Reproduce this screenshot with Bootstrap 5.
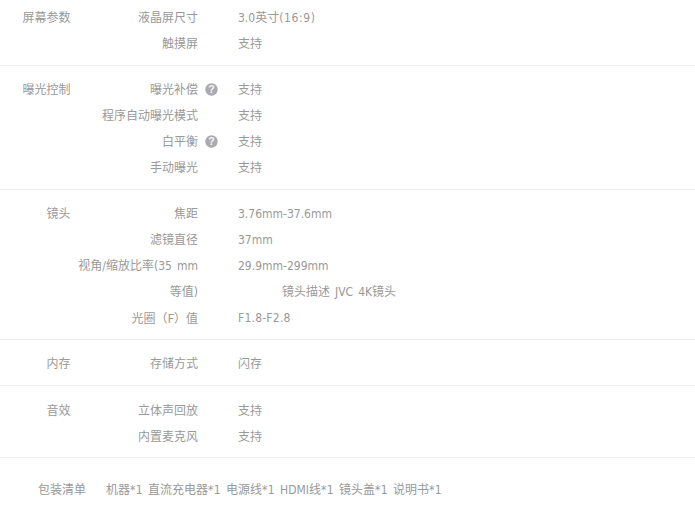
<!DOCTYPE html>
<html lang="zh">
<head>
<meta charset="utf-8">
<title>参数</title>
<link href="https://cdn.jsdelivr.net/npm/bootstrap@5.3.0/dist/css/bootstrap.min.css" rel="stylesheet">
<style>
body{font-family:"DejaVu Sans","Noto Sans CJK SC",sans-serif;font-stretch:condensed;font-size:12px;line-height:26px;word-spacing:1.6px;color:#999;background:#fff;overflow:hidden}
.spec-group{border-bottom:1px solid #eee}
.g1{padding:5px 0 8px}
.g2{padding:11px 0 8px}
.g3{padding:11px 0 8px}
.g4{padding:11px 0 8px}
.g5{padding:12px 0 7px}
.spec-title{width:70.5px;text-align:right;flex:none}
.spec-rows{flex:1}
.spec-name{width:127.5px;margin-right:40px;text-align:right;flex:none;position:relative}
.spec-value.shift{padding-left:44px}
.help-dot{position:absolute;left:134.5px;top:6px;width:13px;height:13px}
.paren-tc{font-family:"Noto Sans CJK TC",sans-serif}
.wide-ratio{letter-spacing:.65px}
.wide-fnum{letter-spacing:.22px}
.qty{letter-spacing:.35px}
.pack{padding:19px 0 0 38px}
.pack-title{margin-right:20px}
</style>
</head>
<body>
<div class="spec-group g1 d-flex">
  <div class="spec-title">屏幕参数</div>
  <div class="spec-rows">
    <div class="d-flex"><div class="spec-name">液晶屏尺寸</div><div class="spec-value">3.0英寸<span class="wide-ratio">(16:9)</span></div></div>
    <div class="d-flex"><div class="spec-name">触摸屏</div><div class="spec-value">支持</div></div>
  </div>
</div>
<div class="spec-group g2 d-flex">
  <div class="spec-title">曝光控制</div>
  <div class="spec-rows">
    <div class="d-flex"><div class="spec-name">曝光补偿<svg class="help-dot" viewBox="0 0 13 13"><circle cx="6.5" cy="6.5" r="6.2" fill="#aaaab0"/><text x="6.5" y="10.3" text-anchor="middle" font-size="10.5" font-weight="700" font-family="Liberation Sans" fill="#f4f4f6">?</text></svg></div><div class="spec-value">支持</div></div>
    <div class="d-flex"><div class="spec-name">程序自动曝光模式</div><div class="spec-value">支持</div></div>
    <div class="d-flex"><div class="spec-name">白平衡<svg class="help-dot" viewBox="0 0 13 13"><circle cx="6.5" cy="6.5" r="6.2" fill="#aaaab0"/><text x="6.5" y="10.3" text-anchor="middle" font-size="10.5" font-weight="700" font-family="Liberation Sans" fill="#f4f4f6">?</text></svg></div><div class="spec-value">支持</div></div>
    <div class="d-flex"><div class="spec-name">手动曝光</div><div class="spec-value">支持</div></div>
  </div>
</div>
<div class="spec-group g3 d-flex">
  <div class="spec-title">镜头</div>
  <div class="spec-rows">
    <div class="d-flex"><div class="spec-name">焦距</div><div class="spec-value">3.76mm-37.6mm</div></div>
    <div class="d-flex"><div class="spec-name">滤镜直径</div><div class="spec-value">37mm</div></div>
    <div class="d-flex"><div class="spec-name">视角/缩放比率(35 mm</div><div class="spec-value">29.9mm-299mm</div></div>
    <div class="d-flex"><div class="spec-name">等值)</div><div class="spec-value shift">镜头描述 JVC 4K镜头</div></div>
    <div class="d-flex"><div class="spec-name paren-tc">光圈（F）值</div><div class="spec-value wide-fnum">F1.8-F2.8</div></div>
  </div>
</div>
<div class="spec-group g4 d-flex">
  <div class="spec-title">内存</div>
  <div class="spec-rows">
    <div class="d-flex"><div class="spec-name">存储方式</div><div class="spec-value">闪存</div></div>
  </div>
</div>
<div class="spec-group g5 d-flex">
  <div class="spec-title">音效</div>
  <div class="spec-rows">
    <div class="d-flex"><div class="spec-name">立体声回放</div><div class="spec-value">支持</div></div>
    <div class="d-flex"><div class="spec-name">内置麦克风</div><div class="spec-value">支持</div></div>
  </div>
</div>
<div class="pack d-flex">
  <div class="pack-title">包装清单</div>
  <div>机器<span class="qty">*1</span> 直流充电器<span class="qty">*1</span> 电源线<span class="qty">*1</span> HDMI线<span class="qty">*1</span> 镜头盖<span class="qty">*1</span> 说明书<span class="qty">*1</span></div>
</div>
</body>
</html>
